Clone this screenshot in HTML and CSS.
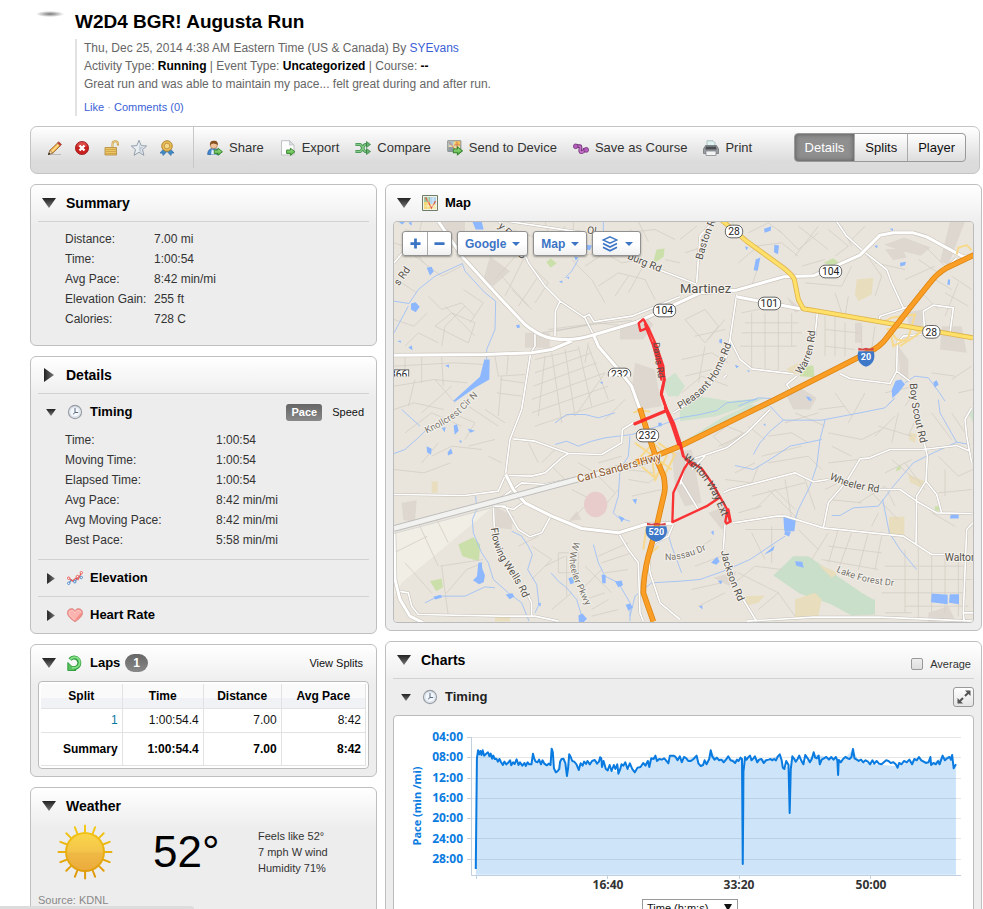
FILE: index.html
```html
<!DOCTYPE html>
<html lang="en">
<head>
<meta charset="utf-8">
<title>W2D4 BGR! Augusta Run</title>
<link rel="stylesheet" href="styles.css">
</head>
<body>
<svg class="defs" width="0" height="0" aria-hidden="true">
  <defs>
    <linearGradient id="gTri" x1="0" y1="0" x2="0" y2="1"><stop offset="0" stop-color="#222"/><stop offset="1" stop-color="#777"/></linearGradient>
    <linearGradient id="gTriR" x1="0" y1="0" x2="1" y2="0"><stop offset="0" stop-color="#222"/><stop offset="1" stop-color="#777"/></linearGradient>
    <linearGradient id="gSun" x1="0" y1="0" x2="0" y2="1"><stop offset="0" stop-color="#fad64a"/><stop offset=".5" stop-color="#f3c34a"/><stop offset=".52" stop-color="#efb945"/><stop offset="1" stop-color="#ecab3e"/></linearGradient>
    <linearGradient id="gRay" gradientUnits="userSpaceOnUse" x1="0" y1="0" x2="0" y2="56"><stop offset="0" stop-color="#f5cb18"/><stop offset="1" stop-color="#dd950a"/></linearGradient>
    <linearGradient id="gGreen" x1="0" y1="0" x2="0" y2="1"><stop offset="0" stop-color="#a5e293"/><stop offset="1" stop-color="#4fae3c"/></linearGradient>
    <symbol id="down" viewBox="0 0 14 10"><path d="M0 0h14L7 10z" fill="url(#gTri)"/></symbol>
    <symbol id="right" viewBox="0 0 10 14"><path d="M0 0v14l10-7z" fill="url(#gTriR)"/></symbol>
    <symbol id="clock" viewBox="0 0 16 16"><circle cx="8" cy="8" r="6.500" fill="#f4f8fc" stroke="#9a9fa5" stroke-width="1.300"/><circle cx="8" cy="8" r="5" fill="none" stroke="#d5e0ec"/><path d="M8 4v4.500M8 8.500h3.200M8 8.500l-2 1.800" stroke="#5b6b80" fill="none"/></symbol>
    <symbol id="arrow" viewBox="0 0 9 8"><path d="M.6 2.400h3.600V.6L8.500 4 4.200 7.400V5.600H.6z" fill="url(#gGreen)" stroke="#34842a" stroke-width=".9"/></symbol>
  </defs>
</svg>

<div class="page">
  <header class="activity">
    <div class="avatar"><span class="smudge"></span></div>
    <div class="activity-body">
      <h1>W2D4 BGR! Augusta Run</h1>
      <div class="meta">
        <p>Thu, Dec 25, 2014 4:38 AM Eastern Time (US &amp; Canada) By <a href="#">SYEvans</a></p>
        <p>Activity Type: <b>Running</b> | Event Type: <b>Uncategorized</b> | Course: <b>--</b></p>
        <p>Great run and was able to maintain my pace... felt great during and after run.</p>
        <p class="social"><a href="#">Like</a> <span>·</span> <a href="#">Comments (0)</a></p>
      </div>
    </div>
  </header>

  <div class="toolbar">
    <div class="icon-tools">
      <button aria-label="Edit"><svg viewBox="0 0 16 16"><path d="M4 14.500h10" stroke="#bbb"/><path d="M1.500 14.500l1.400-4.200L10.500 3l2.800 2.700-7.600 7.500z" fill="#f4b54d" stroke="#8c5b21" stroke-width=".8"/><path d="M4.500 11.800L11.800 4.400" stroke="#ffe2a0" stroke-width="1.300"/><path d="M10.500 3l1.300-1.200 2.800 2.700-1.300 1.200z" fill="#d9372c" stroke="#8e5149" stroke-width=".7"/><path d="M1.500 14.500l1.400-4.200 2.800 2.900z" fill="#f3dfbd" stroke="#7a5a35" stroke-width=".6"/><path d="M1 15l1-2.500 1.500 1.600z" fill="#222"/></svg></button>
      <button aria-label="Delete"><svg viewBox="0 0 16 16"><circle cx="7" cy="8" r="6.600" fill="#c8201f" stroke="#9a2020" stroke-width=".8"/><path d="M2 6.500a5 4.500 0 0 1 10 0z" fill="#e2605b" opacity=".7"/><path d="M4.500 5.500l5 5M9.500 5.500l-5 5" stroke="#fff" stroke-width="2.400"/></svg></button>
      <button aria-label="Unlock"><svg viewBox="0 0 16 16"><path d="M9.500 7V4a2.700 2.700 0 0 1 5.400 0v1.500" fill="none" stroke="#c9a24a" stroke-width="2"/><path d="M9.500 7V4a2.700 2.700 0 0 1 5.400 0" fill="none" stroke="#f5dc98" stroke-width=".7"/><path d="M2 7.500h11.500v7.500H2z" fill="#edc766" stroke="#ae863a" stroke-width=".8"/><path d="M3 9.500h10M3 11.500h10M3 13.500h10" stroke="#cfa347" stroke-width=".9"/></svg></button>
      <button aria-label="Favorite"><svg viewBox="0 0 16 16"><path d="M8 .3l2.200 5.300 5.500.4-4.200 3.600 1.400 5.700L8 12.300 3.100 15.300l1.400-5.700L.3 6l5.500-.4z" fill="#e9eef3" stroke="#8995a3" stroke-width=".9"/><path d="M8 3.500l1.300 3.400 3.600.3L10 9.600l.9 3.300L8 11z" fill="#c3cdd8"/></svg></button>
      <button aria-label="Personal record"><svg viewBox="0 0 16 16"><path d="M4.500 9L1 13l2.500.2.6 2.300L8 11.500l3.900 4 .6-2.300 2.500-.2L11.500 9z" fill="#4189c6" stroke="#24659f" stroke-width=".6"/><circle cx="8" cy="6" r="5.300" fill="#e7bb55" stroke="#af8129" stroke-width=".9"/><circle cx="8" cy="6" r="2.800" fill="#f5d98b" stroke="#bb8d35" stroke-width=".8"/></svg></button>
    </div>
    <div class="actions">
      <button><svg viewBox="0 0 16 16"><path d="M.7 14.500C.7 10 3 8.500 6.500 8.500S12 10 12.300 14.500z" fill="#4487cf" stroke="#245e9e" stroke-width=".7"/><path d="M4 14.500l.8-5.200 2 1.200 1.700-1.200 1 5.200z" fill="#e3effb"/><circle cx="6.800" cy="5" r="3.600" fill="#f0c39a" stroke="#a4703f" stroke-width=".6"/><path d="M3 5.500C2.600 1.600 4.500.7 7 .7s4.300 1.200 3.700 4.500C9.500 3.500 6 4 5 3.500z" fill="#87501f"/><use href="#arrow" x="6.500" y="7.500" width="9.500" height="8.500"/></svg>Share</button>
      <button><svg viewBox="0 0 16 16"><path d="M1.500.7h8L14 5v10H1.500z" fill="#fcfcfc" stroke="#b9bcc0" stroke-width=".9"/><path d="M9.500.7L14 5H9.500z" fill="#dcdfe2" stroke="#b9bcc0" stroke-width=".7"/><use href="#arrow" x="6" y="7.500" width="9.500" height="8.500"/></svg>Export</button>
      <button><svg viewBox="0 0 16 16"><path d="M.5 4.500h4.200c3 0 3 7 6 7h2" fill="none" stroke="#3b8c4b" stroke-width="3"/><path d="M.5 11.500h4.200c3 0 3-7 6-7h2" fill="none" stroke="#3b8c4b" stroke-width="3"/><path d="M.8 4.500h4c3 0 3 7 6 7M.8 11.500h4c3 0 3-7 6-7" fill="none" stroke="#87cb87" stroke-width="1.300"/><path d="M11.500 1.500l4 3-4 3zM11.500 8.500l4 3-4 3z" fill="#67b16d" stroke="#347e42" stroke-width=".7"/></svg>Compare</button>
      <button><svg viewBox="0 0 16 16"><path d="M.8.8h13v10.500H.8z" fill="#e9dda6" stroke="#7a8386"/><path d="M1.300 1.300h5v4h-5z" fill="#a6bdce"/><path d="M8 1.300h5.300V5H8z" fill="#f6c15b"/><path d="M1.300 7h5v4h-5z" fill="#8e9ba6"/><path d="M2 2l6 7M10 1.500v7M7 5h6" stroke="#d36c4c" stroke-width=".8"/><use href="#arrow" x="5.500" y="6" width="10.500" height="9.800"/></svg>Send to Device</button>
      <button><svg viewBox="0 0 17 16"><path d="M3 6h4c3 0-1.500 6 2 6.500 2 .2 2.500-1.500 3-2.500h2" fill="none" stroke="#722d78" stroke-width="3.800"/><path d="M3 6h4c3 0-1.500 6 2 6.500 2 .2 2.500-1.500 3-2.500h2" fill="none" stroke="#c071c4" stroke-width="2"/><circle cx="2.900" cy="6.200" r="2.500" fill="#b45eb9" stroke="#722d78" stroke-width=".8"/><circle cx="14" cy="10" r="2.600" fill="#b45eb9" stroke="#722d78" stroke-width=".8"/></svg>Save as Course</button>
      <button><svg viewBox="0 0 16 16"><path d="M4 .8h6l2 2V7H4z" fill="#dff2f0" stroke="#92aaa9" stroke-width=".7"/><path d="M2.500 5.500h11L15.500 9v4.500H.5V9z" fill="#9a9da2" stroke="#666b70" stroke-width=".7"/><path d="M3 6.500h10l.7 3H2.300z" fill="#4a4d51"/><path d="M3 11h10v4.500H3z" fill="#f2f4f4" stroke="#777c81" stroke-width=".7"/></svg>Print</button>
    </div>
    <div class="tabs">
      <button class="active">Details</button><button>Splits</button><button>Player</button>
    </div>
  </div>

  <main class="columns">
    <div class="col">
      <section class="panel summary">
        <div class="panel-head ruled"><svg class="tri"><use href="#down"/></svg><h2>Summary</h2></div>
        <dl class="facts">
          <dt>Distance:</dt><dd>7.00 mi</dd>
          <dt>Time:</dt><dd>1:00:54</dd>
          <dt>Avg Pace:</dt><dd>8:42 min/mi</dd>
          <dt>Elevation Gain:</dt><dd>255 ft</dd>
          <dt>Calories:</dt><dd>728 C</dd>
        </dl>
      </section>

      <section class="panel details">
        <div class="panel-head ruled"><svg class="tri side"><use href="#right"/></svg><h2>Details</h2></div>
        <div class="sub-head"><svg class="tri small"><use href="#down"/></svg><svg class="ico"><use href="#clock"/></svg><h3>Timing</h3>
          <div class="toggle"><button class="active">Pace</button><button>Speed</button></div></div>
        <dl class="facts wide">
          <dt>Time:</dt><dd>1:00:54</dd>
          <dt>Moving Time:</dt><dd>1:00:54</dd>
          <dt>Elapsed Time:</dt><dd>1:00:54</dd>
          <dt>Avg Pace:</dt><dd>8:42 min/mi</dd>
          <dt>Avg Moving Pace:</dt><dd>8:42 min/mi</dd>
          <dt>Best Pace:</dt><dd>5:58 min/mi</dd>
        </dl>
        <div class="sub-head top-rule"><svg class="tri small side"><use href="#right"/></svg><svg class="ico" viewBox="0 0 16 16"><path d="M1.500 13.500l3-3.500 3.500 2 3-5.500 3.500 1" fill="none" stroke="#4a88c8" stroke-width="1.200"/><path d="M1.500 8l4 3 3.500-3 2 1.500 3.500-7" fill="none" stroke="#ea5a54" stroke-width="1.200"/><g fill="#fff"><g stroke="#4a88c8"><circle cx="1.700" cy="13.300" r="1.200"/><circle cx="7.800" cy="11.800" r="1.200"/><circle cx="14.300" cy="7.500" r="1.200"/></g><g stroke="#ea5a54"><circle cx="1.700" cy="8.200" r="1.200"/><circle cx="10.500" cy="6.500" r="1.200"/><circle cx="14.300" cy="2.700" r="1.200"/></g></g></svg><h3>Elevation</h3></div>
        <div class="sub-head top-rule"><svg class="tri small side"><use href="#right"/></svg><svg class="ico" viewBox="0 0 16 16"><path d="M8 14.800C4 12 .5 9.300.5 5.700.5 1.300 6 .3 8 3.700 10 .3 15.500 1.300 15.500 5.700c0 3.600-3.500 6.300-7.500 9.100z" fill="#f58e89" stroke="#d8837e" stroke-width=".8"/><path d="M8 13C4.500 10.500 2 8.500 2 5.700 2 3 6.500 2.500 8 5.800 9.500 2.500 14 3 14 5.700" fill="#fab3ae" stroke="#fdd4d1"/></svg><h3>Heart Rate</h3></div>
      </section>

      <section class="panel laps">
        <div class="panel-head"><svg class="tri"><use href="#down"/></svg><svg class="ico lap-ico" viewBox="0 0 16 16"><path d="M3 4.500A5.300 5.300 0 1 1 8.500 13H5" fill="none" stroke="#2b9a38" stroke-width="4"/><path d="M.8 15.500V7.500L9 15.500z" fill="#58c05e" stroke="#2b9a38" stroke-width=".9"/><path d="M3.300 4.300A5.300 5.300 0 1 1 8.500 12.800H5" fill="none" stroke="#84df86" stroke-width="2"/></svg><h3>Laps</h3><span class="badge">1</span><a class="view" href="#">View Splits</a></div>
        <div class="table-box">
          <table>
            <colgroup><col class="c-split"><col class="c-time"><col class="c-dist"><col></colgroup>
            <thead><tr><th>Split</th><th>Time</th><th>Distance</th><th>Avg Pace</th></tr></thead>
            <tbody><tr><td><a href="#">1</a></td><td>1:00:54.4</td><td>7.00</td><td>8:42</td></tr></tbody>
            <tfoot><tr><td>Summary</td><td>1:00:54.4</td><td>7.00</td><td>8:42</td></tr></tfoot>
          </table>
        </div>
      </section>

      <section class="panel weather">
        <div class="panel-head"><svg class="tri"><use href="#down"/></svg><h2>Weather</h2></div>
        <div class="now">
          <svg class="sun" viewBox="0 0 56 56"><g stroke="url(#gRay)" stroke-width="2" stroke-linecap="round"><path d="M28 8V1.500M35.700 9.500l2.400-6.200M42.100 13.900l4.600-4.600M46.500 20.300l6.200-2.400M48 28.100h6.500M46.500 35.700l6.200 2.400M42.100 42.100l4.600 4.600M35.700 46.500l2.400 6.200M28.100 48v6.500M20.300 46.500l-2.400 6.200M13.900 42.100l-4.600 4.600M9.500 35.700l-6.200 2.400M8 28.100H1.500M9.500 20.300l-6.200-2.400M13.900 13.900L9.300 9.300M20.300 9.500l-2.400-6.200"/></g><circle cx="28" cy="28" r="20" fill="url(#gRay)"/><circle cx="28" cy="28" r="18" fill="url(#gSun)"/></svg>
          <span class="temp">52°</span>
          <p>Feels like 52°<br>7 mph W wind<br>Humidity 71%</p>
        </div>
        <p class="source">Source: KDNL</p>
      </section>
    </div>

    <div class="col">
      <section class="panel map-panel">
        <div class="panel-head"><svg class="tri"><use href="#down"/></svg><svg class="ico map-ico" viewBox="0 0 16 16"><path d="M.5.500h15v15H.5z" fill="#f2f2e8" stroke="#6f7d66"/><path d="M2 2h6v5H2z" fill="#9cc7a0"/><path d="M8 2h6v7H8z" fill="#b6d6ee"/><path d="M2 7h6v7H2z" fill="#f4d876"/><path d="M8 9h6v5H8z" fill="#f6e9a8"/><path d="M3.500 2.500l3 5 3 5.500 4-7" fill="none" stroke="#e05a3e" stroke-width="1.300"/><path d="M6 2v12M11 2v12M2 11h12" stroke="#fff" stroke-width=".5"/></svg><h3>Map</h3></div>
        <div class="map">
          <svg class="map-canvas" viewBox="27 126 1737 1203" preserveAspectRatio="xMidYMid slice" role="img" aria-label="Run route">
            <defs>
              <path id="t-baston" d="M952 242L966 190Q985 140 1020 60"/>
              <path id="t-pleasant" d="M885 690Q975 640 1010 565T1050 450"/>
              <path id="t-warren" d="M1246 586Q1290 540 1292 430"/>
              <path id="t-scout" d="M1574 612L1578 660Q1590 730 1615 830"/>
              <path id="t-knoll" d="M125 762Q205 725 238 690T300 630"/>
              <path id="t-carl" d="M580 909L860 834"/>
              <path id="t-flowing" d="M317 1046Q325 1115 362 1165T430 1290"/>
              <path id="t-wpkwy" d="M568 1085Q545 1130 560 1180T620 1310"/>
              <path id="t-nassau" d="M840 1142Q900 1145 985 1100"/>
              <path id="t-walton" d="M893 838Q950 880 982 945T1020 1040"/>
              <path id="t-jackson" d="M1008 1115Q1018 1180 1080 1310"/>
              <path id="t-wheeler" d="M1332 898Q1390 930 1510 943"/>
              <path id="t-lake" d="M1353 1176Q1430 1215 1560 1222"/>
              <path id="t-davis" d="M804 490Q812 560 832 660"/>
            </defs>
            <path d="M0 100h1800v1300H0z" fill="#e9e5dc"/>
            <path d="M27 1060L320 985 50 1210 27 1250z" fill="#f1eee6"/>
            <g fill="#ddd7d0">
              <path d="M160 126h80v60l-40 20zM315 230l60 45-50 45-30-20zM420 460h74v45h-74zM705 440l80-25 20 20-30 45h-70zM750 550l60 20 20 110-60 10-30-60zM1497 196l60-22 80 30-30 25-60-15zM1500 210l50-6 15 30-40 8zM1695 126h45l-50 130-25-10zM1565 400l47-10v50h-40zM1670 440h60l15 80-80-10zM1540 500l30 40v60l-25-20zM1410 430h20v60h-20zM1205 350l45 40-20 10zM1200 640l45-15 50 30-20 35h-50zM50 970l45-8-5 65-35-5zM330 980l55 30-5 40-48-5zM860 820l60-10 30 160-50 10-30-60zM970 1000l50-20 20 40-30 30zM985 1195l70-20-20 45zM1630 1300l60-20 20 40-80 10zM550 1025l25-30 15 25z"/>
            </g>
            <g fill="#cfe2cd">
              <path d="M885 665l30-15 60 5 60 10 105-10-130 60-120 75-5-30zM885 795l170-75 100-40-60-5-100 35-110 15z"/>
              <path d="M1225 1130l45 0 160 110 35 20h5v45l-70 3-65-35-90-30-80-55z" fill="#c9dfc9"/>
              <path d="M830 610l40-30 30 40-20 30h-30zM1030 665l110-10-120 40zM1750 700l14-10v40z"/>
            </g>
            <g fill="#cbdfaa">
              <path d="M497 236l18 15-18 14-13-17zM815 210l24-3-3 25-34 24zM1315 250l30-14 20 16-8 12zM1260 560l25-2 3 35-45-3zM220 1095l45-22 20 22-3 50-50-15zM135 1205l35-8 4 26-20 12zM1535 865l15-8-5 14-12 4zM1650 980h12v14h-12z"/>
            </g>
            <g fill="#e8ddbc">
              <path d="M1415 300l50-5-5 50-40 20-10-20zM1205 568l60-30-10 45-40 0zM1512 1012h46v54h-46zM1570 885l50 20-15 18-30-15zM1300 1155l60 25-20 15zM1230 1260l60-20 20 20-10 50-70 10zM1080 1250l60-2-20 22-35 8zM140 906h18v34h-18zM330 1312h45v14h-45zM1575 760l20 5-5 25-18-10z"/>
            </g>
            <!-- residential streets -->
            <g fill="none" stroke="#d5cfc5" stroke-width="2.500">
              <path d="M27 190l60 20 30 40M60 150l70 20 60-20M110 126l-10 50M90 230l80 60 60-30M35 300l60 40M130 350l40 40 60-20 40 40M150 440l50-40 70 30-20 60zM27 420l60 20 40-40M60 500l40-40 60 30M235 330l60 40-40 60M240 380l-60 60-10 60M180 380l90 90M380 330l50 50M350 290l90 100M390 210l100 100-40 60M330 300l70-80M420 230l-60 120M460 290l-60 90M530 190l50 40 60-10M560 240l60 60 40 70M600 260l60-40 50 30 60-10M640 320l60-40 80 20 30 60M690 350l40-60M730 340l50-90M620 180l70 10 50-40M700 200l60 30M380 150l60 20 60 30 40-60M480 126l20 60M565 126v30M720 160l90-10 60 30M760 126l30 60M840 240l45 10"/>
              <path d="M27 560l180-10 90 5M60 527v60M110 530v80M170 530l5 90M27 620l120-20 100 10M90 600l-20 80M150 600l60 70M200 620l-90 80M330 530l10 60 80-5M370 525l-5 60M345 600l70 10M335 640l75 10M350 590l-10 120M450 540l130-30M450 580l170-60M445 620l190-70M440 660l220-80M440 700l230-80M450 740l240-80M500 520l30 210M540 510l30 200M580 500l40 180M480 530l-20 180M610 500l60 160M610 490l-10 60M660 580l-90 130M720 660l-60 60M490 450l150-20 80 10"/>
              <path d="M27 690l60-20 90 20M60 760l80-60 90 40M140 830l60-30 90 10M200 700l70 30-30 50M250 680l90 60M300 690l60 40M160 790l-50 60M250 800l80-20M310 830l40 20M27 870l90 10 80-30M430 790l30 60M470 850l40-40M640 850l70-20M540 900l-40-40M580 850l50 30 60-10M640 890l50 50M720 870l90 10M730 900l60 10 30-20M740 950l90-20M640 1000l60-70M560 930l60 30-60 60M100 1030l60 130M150 1010l40 80M27 1120l100-50M165 1160l130-20M170 1160l20 150M185 1240l60-70 50-20M60 1150l80 90M400 1100l60-30M440 1100l60 40-60 60M480 1160l60-30M520 1120h60v60h-60zM545 1130v120M600 1160l80 80M590 1230l60-60M600 1260l60-20M620 1290l50-30M640 1130l90-40M650 1150l90-30M660 1180l70-10M620 1310l80-20M500 1290l60-50"/>
              <path d="M885 180l50-40M900 220l60-20M1040 126l40 60M1090 160l60-30 40 30M1110 200l80-10 50 40M1180 150l60 60 60-50M1240 140l90 70M1300 140l-70 90M1330 150l60 50-40 30M1370 140l30 60M1400 180l40-40M1060 250l60-50M1120 260l-20 60M1250 260l70-20M1260 310l110 10M1350 340l20 60M1400 260l-30 60M1380 410l10-60M1440 220l50 70-20 60M1470 250l90 20M1600 240l60 40M1620 200l60 60M1560 300l90-40M1600 330l60 60M1650 300l50 30M1700 290l60 40M1680 340l70 40M1720 310l-40 100M1070 400l100-20M1080 430h160M1070 460h180M1065 500h170M1100 400v170M1140 400v170M1180 390v180M1220 400v100M1320 410v120M1350 410v120M1320 450l100 10M1320 500l90 10M1380 430v100M1430 440v70M1470 440l-10 70M900 420l60-30 40 50-40 50zM930 470l90-20M890 540l90-20 50 30M900 590l80-20M960 500l-20 110M1020 420l-50 60M890 640l60-50 80 30M1640 580l70 10M1700 600l60-40M1720 640l44-10M1600 620l-40 60M1500 640l90-20M1440 640l-50 90M1350 640l50 70M1300 690l80-10M1230 700l90 40M1200 730l100-30"/>
              <path d="M985 770l40-30 50 20-60 40zM1000 800l90-40M1090 740l50 40M1150 770l70-10 50 30M1130 830l120-30M1150 850l120-20 40 40M1050 880l60-30M1020 900l80 10 20-50M1330 760l100 20 60-30M1340 800l60 30M1330 850l90-10M1470 770l60-60M1540 700l-20 90M1480 740l100 30M1600 700l-30 70M1320 930l60-30M1330 960l100 10M1100 950l160-40M1110 990l60-60 60 60M1150 930l90 90M1200 900l20 120M1260 900l30 90M1060 1000l70-20M1080 1050h130M1100 1060l40 80M1160 1040v110M1240 1050l60 60M1330 1060l-50 80M1360 1050l-30 100M1400 1060l-40 110M1450 1060l-30 110M1490 1070l-20 100M1330 1100l160 20M1310 1140l170 30M1420 970l80-50 30 60M1450 930l90 90M1520 840l70 60M1500 880l80-40M1560 850l60 80M1660 830l60 60 44-20M1680 870v80M1660 940l100-10M1640 1000l70 40M1600 1090v230M1640 1120v180M1680 1130v170M1720 1130v180M1560 1110v190M1500 1160h240M1520 1200h240M1490 1240h250M1560 1280h190M1500 1300h80M920 1120l60-40M930 1160l80-30 30 60M920 1230l90-20M940 1280l80-40M1050 1210l60-50 80 10M1060 1180l120 60M1120 1290l60-50 50 70M1480 1000l-20 40M1700 700l40 60M1640 700l60 80"/>
            </g>
            <!-- water -->
            <g fill="none" stroke="#9cbff8" stroke-width="2.600" stroke-linejoin="round">
              <path d="M27 365l45 7 28-42 50-40 82-38 8 23 60 65 32 25-2 85-25 60v30M70 380l-43 80M27 822l33-12 45-40 20-20M50 690l55 50M510 730l35-25h55l40 10 50-15M510 795l35-10 35 15 40-15 40-10 80-10 80-25 65-25 60-10 50-12 30-23 90-10M735 770l-5 60-25 40-5 80-15 50 15 15 35 10M272 950l3 40-13 30 3 40 25 60 20 30 15 50 45 40 40 30 22 55M380 1055l30 15 20 30 12 25-14 45 27 45 7 60-12 25M120 1270l40-20h80l60-28 30 3M625 1095l15 55 20 40 40 20 35 60v55M498 1180l22 25 25 20 30 35 15 50M735 1310l15-60 50-40 85-5 60-5 70-25 80-35 60-40 45-30M580 240l-20 35-20 20M655 126v30M845 1050l15 50 30 80"/>
              <path d="M1155 680l40 42h115l115-22 75-15 25-25M1320 722l-15 58-10 80-20 60-35 70-10 30M1195 722l-40 33-30 35-20 35M1310 780l-95 20-60 40-50 30-55-12M1340 1008h25l40-23 75-5 45-60 60-70 60-30 70-32-50-88-5-40M1715 788l40 7M1493 960l20 100 32 50 50 60M1530 655l-20 20M1560 610l30-20 40 5 30 40 20 30M1060 680l60-25 60 3"/>
            </g>
            <g fill="#8db8ff">
              <path d="M262 126h28l6 24h-24zM298 540h16l-1 60-43 25-60 42-5-3 80-72zM125 265l15-3 6 14-11 12zM78 372l14-4 12 14-12 16-14-8zM393 437l10-2 2 9-8 2zM38 486l8-4 3 8zM70 505l10-8 3 15zM180 558l12-3v10zM605 196l16 2-6 14-12-2zM522 306l10-3v8zM545 293l8-2-2 8zM645 608l8-2-1 8zM568 230l12 4-8 10zM41 127l20 0-10 8zM70 130l10-3v12z"/>
              <path d="M125 800l15 8-2 18-12-8zM188 818l10-12 5 16-14 6zM206 738l10-4 5 20-12 12zM170 745l12-2-3 15zM248 748l22 6-14 6zM222 784l8-1-2 8zM820 730h10v10h-10zM742 960l14-2-4 16zM700 1008l18 8-8 12zM280 1150l10-2 2 20 8 20-4 20-14 6-18-12 12-12zM362 1245l20-4 6 10-14 8zM145 1252l22-6 4 8-20 6zM550 1196l18-6 6 18-18 6zM580 1308l12-6 14 16-10 10h-14zM650 1185l12 2v24h-10zM690 1206l20-3 4 14-14 6zM722 1276l14-4 8 12-14 10zM458 1272l10-2-2 12z"/>
              <path d="M1137 148l22-8-2 14-18 6zM1168 196l14 2-3 26-12-6zM1112 240l14-6-8 40-12-2zM1080 200l10 4-6 8zM1545 250l18-3-3 10-14 4zM1468 199l10-2-2 10zM1514 148l10-1v8zM1689 300h6v16h-8zM1520 632l12-28 16-4 12 14-20 26-18 16zM1645 608l10-6 6 14-12 8zM1263 650l14 4-6 10zM1003 480l8-2v14l-8-2zM1050 556l12 4-8 6zM1085 574l8-2v6z"/>
              <path d="M1195 1012l38 5-5 38-30 0zM1200 1055l18 2-6 14-14-6zM1145 1118l24-20-4 14-28 14zM978 1150l18-18 8 14-10 10zM978 1058l8-6v16zM998 1204l14 0-4 10zM942 1280l10-2v12zM1230 1145l22 2 4 18-22-6zM1640 1242l48 4v28l-50-6zM1694 1244h28v30l-30-4zM1697 1005h24v12h-26zM1135 734l6-2v8zM893 672l12-2-2 12zM1271 660l10-2-4 8z"/>
            </g>
            <ellipse cx="632" cy="975" rx="35" ry="38" fill="#e8cccb"/>
            <!-- rail and secondary roads -->
            <path d="M510 455l110-20 120-12M470 460l150-25" fill="none" stroke="#c9c6c1" stroke-width="2"/>
            <g fill="none" stroke-linejoin="round">
              <g stroke="#c3beb6" stroke-width="8">
                <path id="roads" d="M340 126l60 54 30 70 50 70 45 45 75 50 25 50M525 365l-14 30-1 75M595 413l18-8 14 22 113-17 145-58M450 460v40l-13 20-27 170-35 90-13 100M385 778l65 7 100 37-20 13-50 45-40 10-75-2M550 822l100 3 60-35 2-40 33-20M27 945l213 3 100-13 22-50M325 980h35l40 70 35 22 35-12 30-55M345 980l40 10 35-25M330 970l80-60 70 5 100-20M325 980l3 65M425 1240l15 30v40M40 1235l30 5 10 40 20 25 250 5h100l70 15M700 1060l30 50 30 40 5 150 10 26M865 1035l-15 35-40 20-20 40 5 50 30 90 60 50M885 900l55 90M370 126l130 19 100 15M820 270l65 25 50 20M1355 126l30 44 50 45 70 55 15 40 35 75M985 126l-40 44-10 140M1055 345l-20 135 30 60 35 28 125 15M1035 480l-15 60M1297 400l-7 70M1235 590l-30 25 10 15M1365 583l30 14 120 15 20-37 2-85 18-20 55-5M1618 440l-3-45 30-18 60 8-10 75M1715 235l-70 65-70 80-90 30-5 20M1535 575l40 30M1155 690l-70 70-60 45-60 20-60 20-20 70M960 830l-40 40M1015 940l20-10 195-50 55 27 45-7M1475 930h70l50 35 60 35 105 2M1315 1045l15-75 55-65 40-67 30-3 60-25h100l100-12 40 17M1045 1030l130-20h25l115 35 240 25 85 55h45M1615 780l12 50-4 75-28 45-2 145M1623 905l32 40 15 55M1760 685l-20 35 5 50 15 80M1020 1035l-5 75M1075 1260l40 66M1085 1325l200-12 200 0 279 12M1764 1300h-29l3 29M1735 1300l10-250 19-20M27 250l60-70M865 700l80-50 50-60 30-60M1025 585l-10 10"/>
              </g>
              <use href="#roads" stroke="#fff" stroke-width="5"/>
            </g>
            <g fill="none" stroke-linejoin="round">
              <path stroke="#ccc6bd" stroke-width="13" d="M160 126l75 109 105 115 80 85c50 40 80 45 125 45s60-8 95-18l115-34 130-60 60-28 110-8 140-40 90-3 140-62 60-60 40-7h60l40 12 110 60h29M27 527l273-2 140-5 60-10 60-25M625 465l15 35 60 70 40 50 25 70M362 885l23 45 35 40 80 40 90 37 110 13 80-25 85-4M27 1060l3 140 15 60 30 50 40 20M1055 352l190 36"/>
              <path stroke="#fff" stroke-width="9" d="M160 126l75 109 105 115 80 85c50 40 80 45 125 45s60-8 95-18l115-34 130-60 60-28 110-8 140-40 90-3 140-62 60-60 40-7h60l40 12 110 60h29M27 527l273-2 140-5 60-10 60-25M625 465l15 35 60 70 40 50 25 70M362 885l23 45 35 40 80 40 90 37 110 13 80-25 85-4M27 1060l3 140 15 60 30 50 40 20M1055 352l190 36"/>
            </g>
            <!-- interchanges -->
            <g fill="none" stroke="#f6d98d" stroke-width="6">
              <path d="M750 850l55-60 40 40-35 70-10-70M770 860l45 40M820 790l50 35-30 60M750 790l110 80M745 700l20-8 30 5M1500 425l20-10 70-10-20 70-45 25-10-50 20 30 30 5M1505 450l70-10 30 20-60 40M1715 225l5-20 25-8 15 15M785 1040l-10 70M820 1100l-30 30"/>
            </g>
            <!-- highways -->
            <g fill="none" stroke-linejoin="round">
              <path d="M27 1047L790 842" stroke="#bdbdbb" stroke-width="20"/><path d="M27 1047L790 842" stroke="#f2f2f1" stroke-width="14"/><path d="M27 1062L330 982" stroke="#d8d6d2" stroke-width="3"/>
              <path stroke="#dfb44f" stroke-width="15" d="M1010 122l75 63 110 80q28 22 33 35l12 60 15 28 45 7 464 80"/>
              <path stroke="#ffe069" stroke-width="10" d="M1010 122l75 63 110 80q28 22 33 35l12 60 15 28 45 7 464 80"/>
              <g stroke="#dd8512" stroke-width="17"><path id="hwy" d="M1770 225l-85 40q-30 18-50 45l-60 75-70 90q-20 28-55 43l-125 64-155 78-285 140-95 38-40 12M765 686l15 49 35 105 21 50q6 30 2 50l-23 100-25 90q-15 60-15 110l30 86"/></g>
              <use href="#hwy" stroke="#fa9e25" stroke-width="12"/>
            </g>
            <!-- street labels -->
            <g class="street">
              <text class="town" x="885" y="340">Martinez</text>
              <text><textPath href="#t-baston">Baston Rd</textPath></text>
              <text transform="translate(338 142) rotate(45)">y E</text>
              <text transform="translate(412 240) rotate(-60)">d</text>
              <text transform="translate(605 162) rotate(6)">Ol</text>
              <text transform="translate(726 238) rotate(22)">burg Rd</text>
              <text transform="translate(42 320) rotate(-55)">s Rd</text>
              <text><textPath href="#t-pleasant">Pleasant Home Rd</textPath></text>
              <text><textPath href="#t-warren">Warren Rd</textPath></text>
              <text><textPath href="#t-scout">Boy Scout Rd</textPath></text>
              <text class="minor"><textPath href="#t-knoll">Knollcrest Cir N</textPath></text>
              <text class="hwy"><textPath href="#t-carl">Carl Sanders Hwy</textPath></text>
              <text><textPath href="#t-flowing">Flowing Wells Rd</textPath></text>
              <text class="minor"><textPath href="#t-wpkwy">W Wheeler Pkwy</textPath></text>
              <text class="minor"><textPath href="#t-nassau">Nassau Dr</textPath></text>
              <text><textPath href="#t-jackson">Jackson Rd</textPath></text>
              <text><textPath href="#t-wheeler">Wheeler Rd</textPath></text>
              <text class="minor"><textPath href="#t-lake">Lake Forest Dr</textPath></text>
              <text x="1679" y="1143">Walton</text>
            </g>
            <!-- recorded track -->
            <g fill="none" stroke="#fb2528" stroke-linejoin="round" stroke-linecap="round" opacity=".93">
              <path stroke-width="7" d="M788 445l-22 9-5-23 14-12 15 26 25 55 20 60 3 40-10 40 17 50M788 445l-8-10M782 442l22 55 18 63 7 40"/>
              <path stroke-width="9" d="M808 490l18 60 12 50-9 45 16 45 20 40 20 60 10 40M900 835l20 22"/>
              <path stroke-width="10" d="M750 733l95-40"/>
              <path stroke-width="7" d="M840 685l20 50 20 60M905 840l45 27 35 50 20 35 20 35 10 40M1030 990l7 36-12 6-4-6 6-34M912 845l-14 22-33 73-3 88 103-48 40-27"/>
            </g>
            <g class="street on-track">
              <text class="minor"><textPath href="#t-davis">Davis Rd</textPath></text>
              <text><textPath href="#t-walton">Walton Way Ext</textPath></text>
            </g>
            <!-- route shields -->
            <g class="shield">
              <rect x="1021" y="137" width="52" height="38" rx="17"/><text x="1047" y="167">28</text>
              <rect x="805" y="374" width="67" height="38" rx="17"/><text x="838" y="404">104</text>
              <rect x="1303" y="257" width="67" height="38" rx="17"/><text x="1337" y="287">104</text>
              <rect x="1120" y="353" width="67" height="38" rx="17"/><text x="1153" y="383">101</text>
              <rect x="1613" y="438" width="52" height="38" rx="17"/><text x="1639" y="468">28</text>
              <rect x="754" y="749" width="67" height="38" rx="17"/><text x="787" y="779">232</text>
              <svg x="20" y="560" width="730" height="31" viewBox="20 560 730 31"><rect x="670" y="566" width="67" height="38" rx="17"/><text x="704" y="596">232</text><rect x="15" y="571" width="56" height="38"/><text x="41" y="596">366</text></svg>
            </g>
            <g class="interstate">
              <path fill="#3e78c8" d="M1420 515h46c6 20 0 38-23 47-23-9-29-27-23-47z"/><path fill="#d5494b" d="M1420 505q12 5 23 0 12 5 23 0v8h-46z"/><text x="1443" y="541">20</text>
              <path fill="#3e78c8" d="M784 1040h60c6 22-2 38-30 47-28-9-36-25-30-47z"/><path fill="#d5494b" d="M786 1030q14 5 28 0 14 5 28 0v7h-56z"/><text x="814" y="1066">520</text>
            </g>
          </svg>
          <div class="map-controls">
            <div class="zoom"><button aria-label="Zoom in"><svg viewBox="0 0 12 12"><path d="M6 .5v11M.5 6h11" stroke="#3b74c5" stroke-width="3"/></svg></button><button aria-label="Zoom out"><svg viewBox="0 0 12 12"><path d="M.5 6h11" stroke="#3b74c5" stroke-width="3"/></svg></button></div>
            <button class="drop">Google<i></i></button>
            <button class="drop">Map<i></i></button>
            <button class="drop layers" aria-label="Layers"><svg viewBox="0 0 16 16"><path d="M8 .8L15 4 8 7.200 1 4z" fill="none" stroke="#3b74c5" stroke-width="1.400"/><path d="M1 7.500l7 3.500 7-3.500M1 11.200l7 3.500 7-3.500" fill="none" stroke="#3b74c5" stroke-width="1.700"/></svg><i></i></button>
          </div>
        </div>
      </section>

      <section class="panel charts">
        <div class="panel-head ruled"><svg class="tri"><use href="#down"/></svg><h2>Charts</h2><label class="average"><input type="checkbox">Average</label></div>
        <div class="sub-head"><svg class="tri small"><use href="#down"/></svg><svg class="ico"><use href="#clock"/></svg><h3>Timing</h3><button class="expand" aria-label="Expand"><svg viewBox="0 0 14 14"><path d="M8 .5h5.500V6zM.5 8v5.500H6z" fill="#555"/><path d="M8 6l3.500-3.500M2.500 11.500L6 8" stroke="#555" stroke-width="2"/></svg></button></div>
        <div class="chart-box">
          <svg class="chart" viewBox="394 716 579 180" role="img" aria-label="Pace over time">
            <path d="M472 737.500h489M472 757.500h489M472 778.500h489M472 798.500h489M472 818.500h489M472 838.500h489M472 859.500h489" stroke="#e6e6e6"/>
            <g transform="translate(385 635) scale(.3814 .3333)">
              <path d="M238 702L241 370 244 346 247 358 250 348 253 360 256 346 260 362 264 358 270 352 274 364 277 356 281 371 284 362 288 372 292 371 296 380 300 372 304 381 309 390 313 380 318 388 323 383 328 376 331 391 336 382 340 387 345 373 350 390 354 382 360 392 366 384 369 393 374 382 378 388 384 388 388 356 391 370 395 380 400 382 404 374 409 388 413 376 418 386 424 391 430 386 434 390 437 341 440 352 443 400 448 412 453 408 457 402 459 380 463 372 468 371 473 385 477 423 480 400 483 358 487 366 491 378 496 380 502 388 508 405 513 385 518 392 522 380 527 387 531 378 537 388 543 378 550 375 556 386 561 380 564 367 567 370 569 396 573 378 579 402 584 406 589 390 594 408 600 390 604 402 609 388 612 416 617 402 620 388 625 392 630 382 636 402 642 385 648 402 655 412 662 398 670 396 677 384 683 392 689 378 693 396 698 370 704 372 709 362 713 378 719 372 726 374 732 370 738 378 743 385 747 362 752 362 757 362 762 366 767 376 773 364 778 382 784 366 790 370 795 378 802 378 809 372 817 362 822 386 828 393 834 390 838 376 843 388 850 372 854 346 858 364 864 374 870 368 876 376 882 374 888 382 894 374 900 364 906 376 912 378 918 384 923 374 927 378 932 368 936 372 938 687 940 410 944 366 948 374 953 366 957 362 961 376 966 370 970 364 976 382 981 374 987 372 993 384 999 376 1006 374 1011 372 1015 376 1020 372 1025 376 1030 364 1035 358 1040 376 1043 398 1047 402 1052 378 1058 390 1061 534 1064 402 1068 364 1073 372 1077 380 1082 372 1086 362 1091 376 1097 388 1102 360 1108 370 1114 382 1119 372 1124 352 1128 368 1132 370 1137 362 1140 388 1145 374 1151 370 1157 366 1164 374 1170 366 1176 374 1182 366 1186 376 1188 420 1190 375 1195 382 1201 372 1207 366 1213 370 1218 372 1223 366 1227 342 1231 370 1237 374 1242 378 1248 374 1254 382 1260 376 1266 380 1272 388 1278 376 1283 386 1289 378 1295 386 1302 388 1308 382 1314 376 1320 378 1326 384 1333 382 1339 388 1344 398 1348 384 1354 388 1361 378 1368 382 1375 374 1382 388 1388 372 1394 376 1400 366 1406 376 1412 380 1418 384 1425 382 1430 366 1432 390 1438 384 1444 388 1450 378 1454 388 1462 362 1468 376 1474 370 1480 366 1484 374 1487 360 1491 400 1497 388" fill="none" stroke="#0a7be0" stroke-width="2" vector-effect="non-scaling-stroke" stroke-linejoin="round"/>
              <path fill="#0a7be0" fill-opacity=".2" d="M238 719L241 370 247 352 260 356 281 366 296 378 313 386 328 384 360 388 384 386 388 360 400 382 434 388 437 345 443 400 448 412 459 380 468 371 477 420 483 358 491 378 508 402 518 390 543 382 561 380 569 390 584 404 612 412 625 390 655 412 677 388 709 368 743 382 752 362 778 376 817 364 828 393 850 376 854 348 870 370 900 372 936 374 938 687 944 368 1006 374 1035 360 1047 402 1058 390 1061 534 1068 364 1097 386 1124 358 1186 372 1188 420 1195 380 1227 344 1242 378 1272 386 1344 394 1375 380 1400 368 1432 386 1462 366 1487 362 1491 398 1497 388V719z"/>
            </g>
            <path d="M471.500 737v138.500H961M467 737.500h5M467 757.500h5M467 778.500h5M467 798.500h5M467 818.500h5M467 838.500h5M467 859.500h5M476.500 875v4M607.500 875v4M739.500 875v4M870.500 875v4" fill="none" stroke="#c0d0e0"/>
            <g class="y-axis"><text x="463" y="741">04:00</text><text x="463" y="761">08:00</text><text x="463" y="782">12:00</text><text x="463" y="802">16:00</text><text x="463" y="822">20:00</text><text x="463" y="843">24:00</text><text x="463" y="863">28:00</text></g>
            <text class="y-title" transform="translate(421 806) rotate(-90)">Pace (min /mi)</text>
            <g class="x-axis"><text x="608" y="889">16:40</text><text x="739" y="889">33:20</text><text x="871" y="889">50:00</text></g>
          </svg>
          <div class="axis-pick"><span class="select"><select aria-label="Horizontal axis"><option>Time (h:m:s)</option><option>Distance</option></select></span></div>
        </div>
      </section>
    </div>
  </main>
</div>
<div class="status"></div>
</body>
</html>
```
FILE: styles.css
```css
* { box-sizing: border-box; }
html, body { height: 100%; }
body { margin: 0; overflow: hidden; background: #fff; color: #333; font: 12px/18px "Liberation Sans", Arial, sans-serif; }
h1, h2, h3, p, dl, dd { margin: 0; }
button { margin: 0; padding: 0; border: 0; background: none; font: inherit; color: inherit; cursor: pointer; }
a { color: #3b5fd6; text-decoration: none; }
svg { display: block; flex: none; }
.defs { position: absolute; }
.page { padding: 8px 1px 0 30px; }

.activity { display: flex; margin-bottom: 10px; }
.avatar { width: 45px; padding: 3px 0 0 6px; }
.smudge { display: block; width: 28px; height: 6px; background: radial-gradient(closest-side, #777, rgba(255, 255, 255, 0)); }
h1 { font-size: 19px; line-height: 28px; color: #000; }
.meta { margin-top: 3px; border-left: 2px solid #e2e2e2; padding-left: 7px; color: #666; }
.meta b { color: #000; }
.meta .social { padding-top: 5px; font-size: 11px; }
.social span { color: #aaa; }

.toolbar { display: flex; align-items: flex-start; height: 48px; margin: 0 2px 10px 0; border: 1px solid #c4c4c4; border-radius: 7px; background: linear-gradient(#fff, #dcdcdc 75%, #dadada); font-size: 13px; color: #333; }
.icon-tools { display: flex; align-items: flex-start; gap: 12px; height: 41px; padding: 13px 18px 0 16px; border-right: 1px solid #c8c8c8; }
.icon-tools svg, .actions svg { width: 16px; height: 16px; }
.actions { display: flex; gap: 16px; padding: 12px 0 0 13px; }
.actions button { display: flex; align-items: center; gap: 6px; white-space: nowrap; }
.tabs { display: flex; margin: 6px 13px 0 auto; border: 1px solid #999; border-radius: 4px; background: linear-gradient(#fff, #ddd); overflow: hidden; color: #111; }
.tabs button { height: 27px; padding: 0 10px; border-left: 1px solid #aaa; }
.tabs .active { border-left: 0; background: #8f8f8f; box-shadow: inset 0 0 5px #555; color: #fff; }

.columns { display: grid; grid-template-columns: 347fr 597fr; gap: 8px; align-items: start; }
.col { display: grid; gap: 10px; min-width: 0; }
.panel { padding: 0 7px; border: 1px solid #bfbfbf; border-radius: 6px; background: linear-gradient(#fff, #ededed 40px); }
.panel-head { display: flex; align-items: center; height: 36px; padding-left: 4px; }
.panel-head.ruled { height: 37px; border-bottom: 1px solid #d2d2d2; }
h2 { font-size: 14px; color: #000; }
h3 { font-size: 13px; color: #000; }
.tri { width: 14px; height: 10px; margin-right: 10px; }
.tri.side { width: 10px; height: 14px; margin: 0 12px 0 2px; }
.tri.small { width: 10px; height: 7px; margin: 0 11px 0 8px; }
.tri.small.side { width: 8px; height: 11px; margin: 0 12px 0 9px; }
.ico { width: 16px; height: 16px; margin-right: 7px; }
.lap-ico { margin-left: 1px; }
.sub-head { display: flex; align-items: center; height: 36px; }
.top-rule { height: 37px; border-top: 1px solid #d2d2d2; }

.facts { display: grid; grid-template-columns: 89px 1fr; line-height: 20px; padding: 7px 0 16px 27px; white-space: nowrap; }
.facts.wide { grid-template-columns: 151px 1fr; padding: 0 0 9px 27px; }
.toggle { display: flex; gap: 5px; margin-left: auto; font-size: 11px; color: #111; }
.toggle button { height: 17px; padding: 0 5px; border-radius: 3px; line-height: 15px; }
.toggle .active { background: linear-gradient(#666, #888); color: #fff; font-weight: bold; }

.badge { margin-left: 5px; padding: 0 8px; border-radius: 9px; background: linear-gradient(#666, #888); color: #fff; font-weight: bold; }
.view { margin-left: auto; padding-right: 6px; font-size: 11px; color: #111; }
.laps { padding-bottom: 7px; }
.table-box { padding: 2px; border: 1px solid #bbb; border-radius: 4px; background: #fff; }
table { width: 100%; border-collapse: collapse; table-layout: fixed; color: #111; }
.c-split { width: 25%; }
.c-time { width: 25%; }
.c-dist { width: 24%; }
th, td { height: 24px; padding: 0 4px; border: solid #e2e2e2; border-width: 0 1px 1px 0; text-align: right; }
th { padding: 0; text-align: center; background: linear-gradient(#fafafa 60%, #f0f2f5 60%); color: #000; }
td a { color: #0a78a0; }
tfoot td { height: 33px; font-weight: bold; color: #000; }

.now { display: flex; align-items: center; padding-left: 19px; height: 56px; }
.sun { width: 56px; height: 56px; }
.temp { margin-left: 40px; width: 105px; font-size: 44px; line-height: 44px; color: #000; }
.now p, .source { font-size: 11px; line-height: 16px; }
.source { padding: 12px 0; color: #888; }

.map-panel { padding-bottom: 7px; }
.map-panel .ico { margin-left: 1px; }
.map { position: relative; overflow: hidden; border: 1px solid #bbb; border-radius: 4px; }
.map-canvas { width: 100%; height: 400px; }
.street { font: 31px Roboto, sans-serif; fill: #55504a; stroke: #f4f2ed; stroke-width: 6px; paint-order: stroke; stroke-linejoin: round; }
.street .town { font-size: 39px; }
.street .minor { font-size: 28px; fill: #77736c; }
.street .hwy { font-size: 33px; fill: #8a5228; }
.on-track { stroke: none; }
.street.on-track .minor { fill: #55504a; }
.shield { font: 31px Roboto, sans-serif; text-anchor: middle; fill: #222; }
.shield rect { fill: #fff; stroke: #666; stroke-width: 3px; }
.interstate { font: bold 27px Roboto, sans-serif; text-anchor: middle; }
.interstate text { fill: #fff; }
.map-controls { position: absolute; left: 8px; top: 9px; display: flex; gap: 5px; color: #3b74c5; font-weight: bold; }
.zoom, .drop { display: flex; align-items: center; height: 25px; border: 1px solid #909090; border-radius: 3px; background: linear-gradient(#fff 50%, #f0f0f0); box-shadow: 0 1px 2px rgba(0, 0, 0, .35); }
.zoom button { display: grid; place-items: center; width: 24px; height: 23px; }
.zoom button + button { border-left: 1px solid #aaa; }
.zoom svg { width: 11px; height: 11px; }
.drop { padding: 0 7px; gap: 6px; }
.drop i { border: 4px solid transparent; border-top-color: #3b74c5; border-bottom: 0; }
.layers { padding-left: 9px; gap: 7px; }
.layers svg { width: 16px; height: 16px; }

.average { display: flex; align-items: center; gap: 7px; margin: 8px 3px 0 auto; font-size: 11px; }
.average input { appearance: none; width: 12px; height: 12px; margin: 0; border: 1px solid #999; border-radius: 2px; background: linear-gradient(#eee, #ddd); }
.charts h3 { color: #222; }
.expand { display: grid; place-items: center; width: 21px; height: 20px; margin-left: auto; border: 1px solid #999; border-radius: 3px; background: linear-gradient(#fff, #e4e4e4); }
.expand svg { width: 14px; height: 14px; }
.chart-box { border: 1px solid #bbb; border-radius: 4px; background: #fff; }
.chart { width: 100%; }
.chart text { font: bold 12px "Open Sans", sans-serif; }
.chart .y-title { font-size: 11px; }
.y-axis, .y-title { fill: #0a7be0; }
.y-axis { text-anchor: end; }
.x-axis, .y-title { text-anchor: middle; }
.x-axis { fill: #333; }
.axis-pick { display: flex; justify-content: center; padding: 3px 0 20px 13px; }
.select { position: relative; }
.select::after { content: ""; position: absolute; right: 6px; top: 5px; border: 4px solid transparent; border-top: 7px solid #111; border-bottom: 0; pointer-events: none; }
select { appearance: none; width: 96px; height: 18px; padding: 0 4px; border: 1px solid #999; border-radius: 0; background: #fff; font: 11px "Liberation Sans", Arial, sans-serif; color: #111; }

.status { position: fixed; left: 0; bottom: 0; width: 194px; height: 3px; border-radius: 0 3px 0 0; background: #dcdcdc; }
```
